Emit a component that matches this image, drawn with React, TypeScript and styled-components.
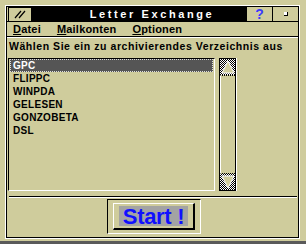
import React from "react";
import styled, { createGlobalStyle } from "styled-components";

const beige = "#cfcc9c";

const GlobalStyle = createGlobalStyle`
    html, body {
        margin: 0;
        padding: 0;
        background: ${beige};
    }
    * {
        box-sizing: border-box;
    }
`;

const Page = styled.div`
    width: 306px;
    height: 244px;
    padding: 5px 6px 3px 5px;
    border-bottom: 3px solid #5a5a5a;
    font-family: "Liberation Sans", Arial, sans-serif;
    font-weight: bold;
`;

const Frame = styled.div`
    height: 234px;
    border: 1px solid #fff;
`;

const Inner = styled.div`
    height: 100%;
    border: 1px solid #000;
    display: flex;
    flex-direction: column;
`;

const TitleRow = styled.div`
    display: flex;
    height: 15px;
    padding-left: 1px;
    border-bottom: 1px solid #000;
`;

const SysBox = styled.div`
    width: 24px;
    border: 1px solid #000;
    border-bottom: none;
    display: flex;
    align-items: center;
    justify-content: center;
`;

const TitleBar = styled.div`
    flex: 1;
    background: #000;
    color: #fff;
    font-size: 11px;
    letter-spacing: 2.6px;
    line-height: 14px;
    text-align: center;
    padding-left: 26px;
`;

const TitleButton = styled.div`
    width: 26px;
    border-left: 1px solid #000;
    display: flex;
    align-items: center;
    justify-content: center;
    color: #3a3aff;
    font-size: 14px;
    line-height: 14px;
`;

const RestoreDot = styled.div`
    width: 4px;
    height: 4px;
    background: #fff;
    border-right: 1px solid #000;
    border-bottom: 1px solid #000;
`;

const MenuBar = styled.div`
    display: flex;
    gap: 16px;
    height: 15px;
    padding-left: 6px;
    font-size: 11px;
    letter-spacing: 0.2px;
    line-height: 14px;
    border-bottom: 1px solid #000;
    box-shadow: 0 1px 0 #fff;
`;

const MenuItem = styled.span`
    color: #000;
`;

const Key = styled.span`
    text-decoration: underline;
`;

const Label = styled.div`
    font-size: 10.5px;
    letter-spacing: 0.55px;
    line-height: 14px;
    padding: 2px 0 0 2px;
    white-space: nowrap;
`;

const ListArea = styled.div`
    display: flex;
    gap: 4px;
    margin: 5px 0 0 1px;
    height: 133px;
`;

const ListBox = styled.div`
    width: 207px;
    border-top: 1px solid #000;
    border-left: 1px solid #000;
    border-right: 1px solid #fff;
    border-bottom: 1px solid #fff;
    padding: 0 0 0 1px;
`;

const Row = styled.div<{ $selected?: boolean }>`
    height: 13px;
    line-height: 12px;
    font-size: 10px;
    letter-spacing: 0.3px;
    padding-left: 2px;
    margin-right: 1px;
    color: ${(p) => (p.$selected ? "#fff" : "#000")};
    background: ${(p) => (p.$selected ? "#555" : "transparent")};
    border: 1px dotted ${(p) => (p.$selected ? "#ddd" : "transparent")};
`;

const ScrollBar = styled.div`
    width: 16px;
    border: 1px solid #000;
    border-right: none;
    box-shadow: 1px 0 0 #000, 2px 0 0 #fff;
    display: flex;
    flex-direction: column;
`;

const Arrow = styled.div`
    height: 16px;
    background-color: #000;
    background-image: repeating-conic-gradient(#000 0 25%, #fff 0 50%);
    background-size: 2px 2px;
    display: flex;
    align-items: center;
    justify-content: center;
`;

const Track = styled.div`
    flex: 1;
    border-top: 1px dotted #000;
    border-bottom: 1px dotted #000;
    border-left: 1px solid #fff;
`;

const Separator = styled.div`
    margin: 5px 1px 0 2px;
    border-top: 1px solid #000;
    border-bottom: 1px solid #fff;
`;

const Footer = styled.div`
    display: flex;
    justify-content: center;
    padding: 1px 0 0 0;
`;

const ButtonWell = styled.div`
    width: 94px;
    height: 35px;
    margin-left: 3px;
    border-top: 1px solid #000;
    border-left: 1px solid #000;
    border-right: 1px solid #fff;
    border-bottom: 1px solid #fff;
    padding: 3px 5px 3px 5px;
`;

const StartButton = styled.div`
    height: 100%;
    border-top: 1px solid #fff;
    border-left: 1px solid #fff;
    border-right: 2px solid #000;
    border-bottom: 2px solid #000;
    padding: 2px 5px 2px 5px;
`;

const StartFace = styled.div`
    height: 100%;
    background: #a3a3a3;
    color: #1010ff;
    font-family: "Liberation Sans", Arial, sans-serif;
    font-size: 22px;
    font-weight: bold;
    line-height: 21px;
    text-align: center;
    letter-spacing: -0.3px;
`;

const items = ["GPC", "FLIPPC", "WINPDA", "GELESEN", "GONZOBETA", "DSL"];

const App: React.FC = () => {
    return (
        <Page>
            <GlobalStyle />
            <Frame>
                <Inner>
                    <TitleRow>
                        <SysBox>
                            <svg width="12" height="9" viewBox="0 0 12 9">
                                <path d="M1 8 L7 1 M5 8 L11 1" stroke="#000" strokeWidth="1.2" fill="none" />
                            </svg>
                        </SysBox>
                        <TitleBar>Letter Exchange</TitleBar>
                        <TitleButton>?</TitleButton>
                        <TitleButton>
                            <RestoreDot />
                        </TitleButton>
                    </TitleRow>
                    <MenuBar>
                        <MenuItem>
                            <Key>D</Key>atei
                        </MenuItem>
                        <MenuItem>
                            <Key>M</Key>ailkonten
                        </MenuItem>
                        <MenuItem>
                            <Key>O</Key>ptionen
                        </MenuItem>
                    </MenuBar>
                    <Label>Wählen Sie ein zu archivierendes Verzeichnis aus</Label>
                    <ListArea>
                        <ListBox>
                            {items.map((name, i) => (
                                <Row key={name} $selected={i === 0}>
                                    {name}
                                </Row>
                            ))}
                        </ListBox>
                        <ScrollBar>
                            <Arrow>
                                <svg width="14" height="14" viewBox="0 0 14 14">
                                    <path d="M7 1 L13 13 L1 13 Z" fill={beige} stroke="#fff" strokeWidth="1" />
                                </svg>
                            </Arrow>
                            <Track />
                            <Arrow>
                                <svg width="14" height="14" viewBox="0 0 14 14">
                                    <path d="M1 1 L13 1 L7 13 Z" fill={beige} stroke="#fff" strokeWidth="1" />
                                </svg>
                            </Arrow>
                        </ScrollBar>
                    </ListArea>
                    <Separator />
                    <Footer>
                        <ButtonWell>
                            <StartButton>
                                <StartFace>Start !</StartFace>
                            </StartButton>
                        </ButtonWell>
                    </Footer>
                </Inner>
            </Frame>
        </Page>
    );
};

export default App;
